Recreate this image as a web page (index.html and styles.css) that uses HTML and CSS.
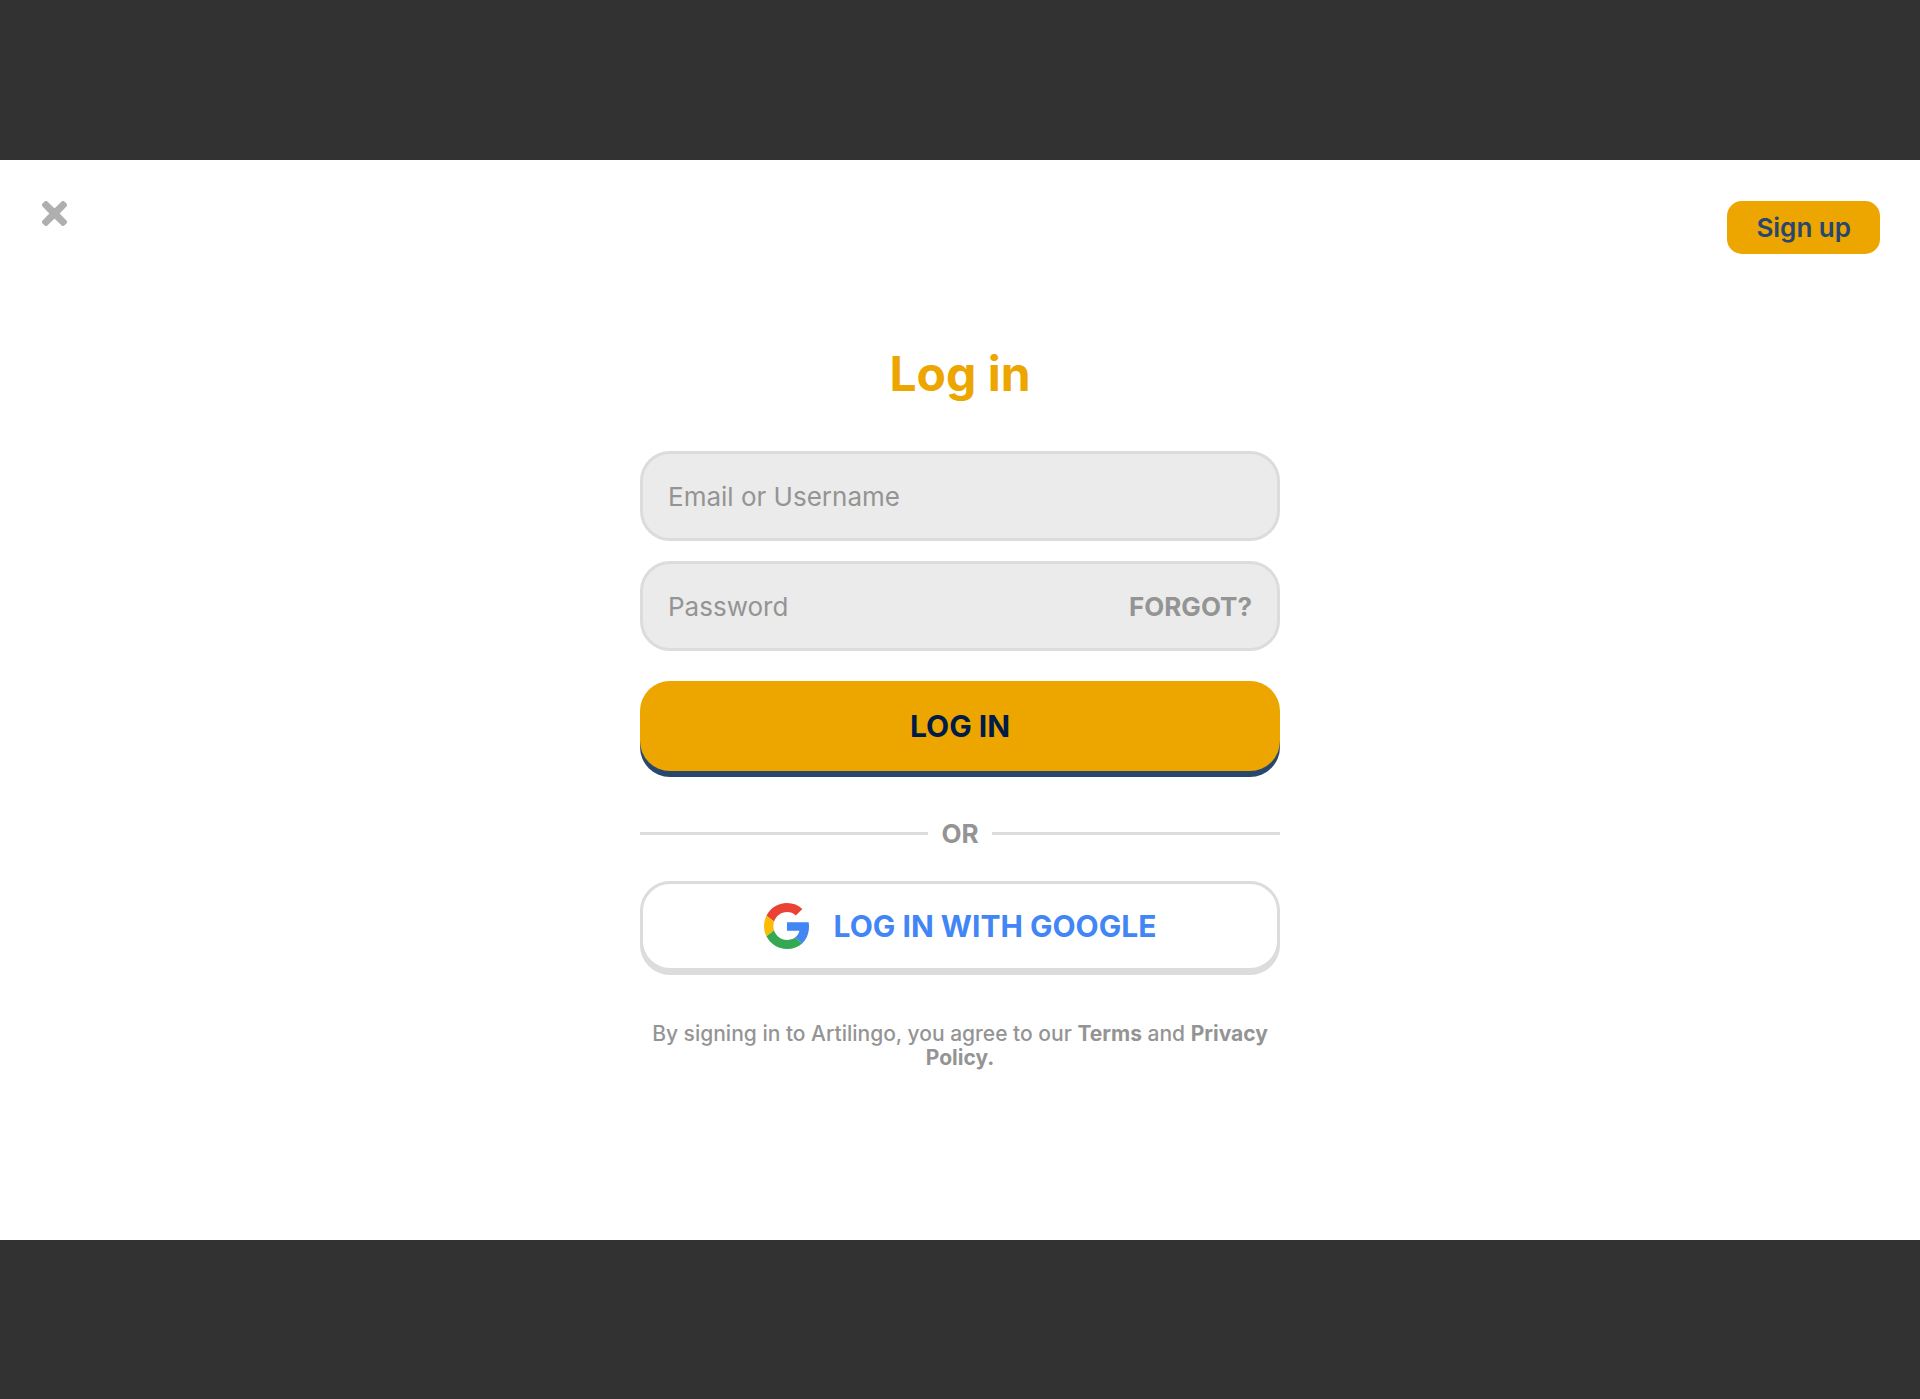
FILE: index.html
```html
<!DOCTYPE html>
<html lang="en">

<head>
    <meta charset="utf-8" />
    <meta name="viewport" content="width=device-width, initial-scale=1" />
    <title>Log in - Artilingo</title>
    <link rel="stylesheet" href="styles.css">
</head>

<body>
    <div class="page">
        <header class="header">
            <button class="close" type="button" aria-label="Close">
                <svg viewBox="0 0 25 25" width="25" height="25">
                    <path d="M4 2L12.5 10.2L21 2L23 4L14.8 12.5L23 21L21 23L12.5 14.8L4 23L2 21L10.2 12.5L2 4z" />
                </svg>
            </button>
            <a class="signup" href="#">Sign up</a>
        </header>
        <main class="login">
            <h1 class="title">Log in</h1>
            <form class="form">
                <div class="field">
                    <input type="text" name="user" placeholder="Email or Username" aria-label="Email or Username">
                </div>
                <div class="field">
                    <input type="password" name="password" placeholder="Password" aria-label="Password">
                    <a class="forgot" href="#">FORGOT?</a>
                </div>
                <button class="button submit" type="submit">LOG IN</button>
            </form>
            <div class="divider">OR</div>
            <button class="button google" type="button">
                <svg viewBox="0 0 48 48" width="46" height="46" aria-hidden="true">
                    <path fill="#EA4335" d="M24 9.5c3.54 0 6.71 1.22 9.21 3.6l6.85-6.85C35.9 2.38 30.47 0 24 0 14.62 0 6.51 5.38 2.56 13.22l7.98 6.19C12.43 13.72 17.74 9.5 24 9.5z" />
                    <path fill="#4285F4" d="M46.98 24.55c0-1.57-.15-3.09-.38-4.55H24v9.02h12.94c-.58 2.96-2.26 5.48-4.78 7.18l7.73 6c4.51-4.18 7.09-10.36 7.09-17.65z" />
                    <path fill="#FBBC05" d="M10.53 28.59c-.48-1.45-.76-2.99-.76-4.59s.27-3.14.76-4.59l-7.98-6.19C.92 16.46 0 20.12 0 24c0 3.88.92 7.54 2.56 10.78l7.97-6.19z" />
                    <path fill="#34A853" d="M24 48c6.48 0 11.93-2.13 15.89-5.81l-7.73-6c-2.15 1.45-4.92 2.3-8.16 2.3-6.26 0-11.57-4.22-13.47-9.91l-7.98 6.19C6.51 42.62 14.62 48 24 48z" />
                </svg>
                LOG IN WITH GOOGLE
            </button>
            <p class="terms">
                By signing in to Artilingo, you agree to our <a href="#">Terms</a> and <a href="#">Privacy Policy.</a>
            </p>
        </main>
    </div>
</body>

</html>
```

FILE: styles.css
```css
* {
    box-sizing: border-box;
}

body {
    display: flex;
    flex-direction: column;
    min-height: 100vh;
    margin: 0;
    padding: 160px 0 159px;
    background-color: #323232;
    font-family: Inter, "Open Sans", sans-serif;
}

a {
    color: inherit;
    text-decoration: none;
}

button,
input {
    font-family: inherit;
}

.page {
    flex: 1;
    padding: 41px 40px;
    background-color: #fff;
}

.header {
    display: flex;
    justify-content: space-between;
    align-items: flex-start;
}

.close {
    padding: 0 2px;
    border: none;
    background: none;
    cursor: pointer;
}

.close svg {
    display: block;
    fill: #afafaf;
    stroke: #afafaf;
    stroke-width: 4;
    stroke-linejoin: round;
}

.signup {
    padding: 0 29px;
    border-radius: 15px;
    background-color: #eda500;
    color: #27476e;
    font-size: 26px;
    font-weight: 600;
    line-height: 53px;
}

.login {
    max-width: 640px;
    margin: 93px auto 0;
}

.title {
    margin: 0 0 50px;
    color: #eda500;
    font-size: 48px;
    font-weight: 700;
    line-height: 54px;
    text-align: center;
}

.form {
    display: flex;
    flex-direction: column;
    gap: 20px;
}

.field {
    display: flex;
    align-items: center;
    height: 90px;
    padding: 0 25px;
    border: 3px solid #dcdcdc;
    border-radius: 30px;
    background-color: #ebebeb;
}

.field input {
    flex: 1;
    min-width: 0;
    padding: 0;
    border: none;
    outline: none;
    background: none;
    color: #4b4b4b;
    font-size: 26px;
}

.field input::placeholder {
    color: #949494;
}

.forgot {
    color: #949494;
    font-size: 26px;
    font-weight: 700;
}

.button {
    display: flex;
    align-items: center;
    justify-content: center;
    gap: 24px;
    width: 100%;
    height: 90px;
    border: none;
    border-radius: 30px;
    font-size: 30px;
    font-weight: 700;
    cursor: pointer;
}

.submit {
    margin-top: 10px;
    background-color: #eda500;
    box-shadow: 0 6px 0 #27476e;
    color: #001b48;
}

.google {
    border: 3px solid #dcdcdc;
    background-color: #fff;
    box-shadow: 0 4px 0 #dcdcdc;
    color: #4285f4;
}

.divider {
    display: grid;
    grid-template-columns: 1fr 64px 1fr;
    align-items: center;
    margin: 47px 0 32px;
    color: #949494;
    font-size: 26px;
    font-weight: 700;
    line-height: 31px;
    text-align: center;
}

.divider::before,
.divider::after {
    content: "";
    height: 3px;
    background-color: #dcdcdc;
}

.terms {
    margin: 51px 0 0;
    color: #949494;
    font-size: 21px;
    font-weight: 500;
    line-height: 24px;
    text-align: center;
}

.terms a {
    font-weight: 700;
}
```
